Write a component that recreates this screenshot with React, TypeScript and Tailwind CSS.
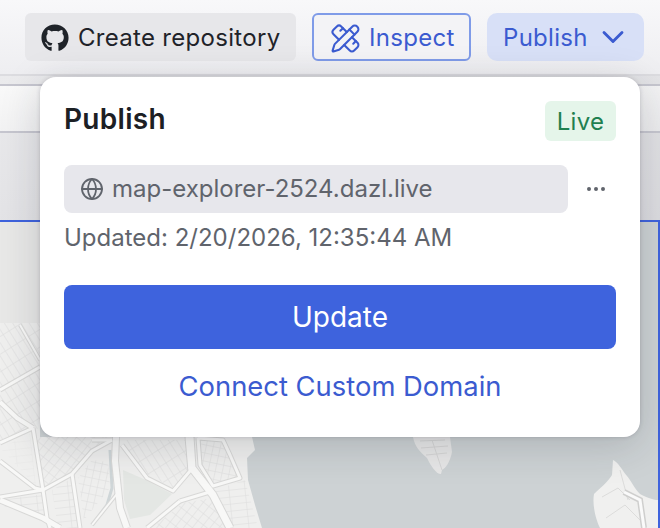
import { ChevronDown, Ellipsis, Globe, PencilRuler } from 'lucide-react';
import { FaGithub } from 'react-icons/fa';

const land = '#efefee';
const street = '#dcdcdb';
const road = '#f8f8f7';
const roadEdge = '#d8d8d7';

// Main roads as [path, width], drawn twice to get the darker casing
const roads: [string, number][] = [
    ['M33 428L43 490L47 518L50 528', 3],
    ['M0 461L35 488L43 490', 3],
    ['M0 497L43 490L72 474L92 451L112 440', 3],
    ['M72 474L80 528', 3],
    ['M0 500L43 518L60 528', 5],
    ['M0 390L40 367', 3],
    ['M20 325L40 360', 2],
    ['M0 402L17 418L33 428', 4],
    ['M0 443L33 428', 3],
    ['M122 445L147 478L173 491L190 471L187 437', 3],
    ['M180 501L147 528', 3],
    ['M213 491L180 501', 3],
    ['M198 438L200 465L213 486L240 478L230 455L223 440L198 438', 3],
    ['M92 440L112 440', 3],
    ['M92 525L120 490', 2],
    ['M116 437L115 461L120 508L127 528', 6],
    ['M190 437L192 468L213 495L230 528', 7],
];

// Map tile under the popover, in page coordinates
function MapBackdrop() {
    return (
        <svg className="block w-full h-full" viewBox="0 222 658 306" preserveAspectRatio="none">
            <defs>
                <pattern id="gridA" width="7" height="15" patternUnits="userSpaceOnUse" patternTransform="rotate(-32)">
                    <path d="M0 0H7M0 0V15" fill="none" stroke={street} strokeWidth="1" />
                </pattern>
                <pattern id="gridB" width="16" height="7" patternUnits="userSpaceOnUse" patternTransform="rotate(-6)">
                    <path d="M0 0H16M0 0V7" fill="none" stroke={street} strokeWidth="1" />
                </pattern>
                <pattern id="gridC" width="7" height="9" patternUnits="userSpaceOnUse" patternTransform="rotate(38)">
                    <path d="M0 0H7M0 0V9" fill="none" stroke={street} strokeWidth="1" />
                </pattern>
                <pattern id="gridD" width="7" height="8" patternUnits="userSpaceOnUse" patternTransform="rotate(12)">
                    <path d="M0 0H7M0 0V8" fill="none" stroke={street} strokeWidth="1" />
                </pattern>
            </defs>

            <rect x="0" y="222" width="658" height="306" fill="#cdd2d4" />
            <rect x="0" y="222" width="40" height="101" fill="#e8e8e7" />
            <path d="M0 323H40V437H252L255 450L247 458L248 480L255 505L262 528H0Z" fill={land} />
            <path d="M413 437H450L452 452C450 462 446 468 442 470L441 474C436 474 431 466 427 458C420 452 415 447 413 437Z" fill="#e7e7e7" />
            <path d="M613 460C618 462 622 470 627 476C632 482 634 488 640 494C648 498 654 500 658 500V528H600C596 520 592 505 594 494C600 488 608 482 612 475Z" fill="#f0f0ef" />

            <path d="M0 323H40V428L0 445Z" fill="url(#gridA)" />
            <path d="M36 437H112L92 451L72 474L43 490L33 430Z" fill="url(#gridC)" />
            <path d="M0 500L43 494L47 518L0 505ZM52 490L72 478L80 528H58Z" fill="url(#gridB)" />
            <path d="M78 478L92 460L108 462L110 488L84 520Z" fill="url(#gridD)" />
            <path d="M124 440H186L188 470L173 488L147 474L124 444Z" fill="url(#gridA)" />
            <path d="M200 440L224 442L238 476L214 484L202 464Z" fill="url(#gridD)" />
            <path d="M215 490L245 480L258 528H232Z" fill="url(#gridB)" />
            <path d="M183 503L212 498L226 528H152Z" fill="url(#gridC)" />
            <path d="M0 448L30 434L36 486Z" fill="url(#gridB)" opacity="0.4" />
            <path d="M123 470L146 480L172 494L150 515L130 519L124 500Z" fill="#e4e7e4" />
            <path d="M420 441L445 440M421 448L448 446M426 455L447 453M432 440L442 470" fill="none" stroke="#d6d6d6" />
            <path d="M602 497L618 488L630 500M606 518L625 505L640 520M620 470L628 500" fill="none" stroke="#dcdcdb" />

            <path d="M110 450L112 488L107 505L92 525" fill="none" stroke="#cfd6d8" strokeWidth="3" />

            {roads.map(([d, width]) => (
                <path key={`edge-${d}`} d={d} fill="none" stroke={roadEdge} strokeWidth={width + 2} strokeLinejoin="round" />
            ))}
            {roads.map(([d, width]) => (
                <path key={d} d={d} fill="none" stroke={road} strokeWidth={width} strokeLinejoin="round" />
            ))}
            <path d="M624 492L640 500L644 528" fill="none" stroke="#cfcfce" strokeWidth="6" />
            <path d="M624 492L640 500L644 528" fill="none" stroke="#fafafa" strokeWidth="3" />
        </svg>
    );
}

export default function App() {
    return (
        <div className="relative w-[660px] h-[528px] overflow-hidden bg-[#f1f1f3] font-['Inter',sans-serif]">
            {/* Top toolbar */}
            <div className="h-[76px] flex items-center justify-end gap-4 pr-4 bg-gradient-to-b from-[#f8f8fa] to-[#eeeef1] border-b-2 border-[#dcdce0]">
                <button className="w-[271px] h-12 flex items-center gap-[9px] pl-4 pt-[2px] rounded-md bg-[#e7e7ea] text-[#1f2329] text-[24px] tracking-[0.3px]">
                    <FaGithub className="w-7 h-7 shrink-0" />
                    Create repository
                </button>
                <button className="w-[159px] h-12 flex items-center gap-[8px] pl-4 pt-[2px] rounded-md bg-[#f3f3f6] border-2 border-[#7f9be8] text-[#3b5bd0] text-[24px] tracking-[0.3px]">
                    <PencilRuler className="w-[31px] h-[31px] shrink-0" strokeWidth={1.6} />
                    Inspect
                </button>
                <button className="w-[157px] h-12 flex items-center gap-[7px] pl-4 pt-[2px] rounded-[10px] bg-[#d8e0f7] text-[#3b5bd0] text-[24px] tracking-[0.3px]">
                    Publish
                    <ChevronDown className="w-9 h-9 -mt-[2px]" strokeWidth={1.9} />
                </button>
            </div>

            {/* Grey editor rows above the selected map frame */}
            <div className="h-[144px] pt-[8px] bg-gradient-to-br from-[#ebebed] to-[#dcdce0]">
                <div className="h-[49px] border-y-2 border-[#c6c6cf] bg-gradient-to-br from-[#f9f9f9] to-[#ececee]" />
            </div>

            {/* Map preview with selection outline */}
            <div className="h-[308px] border-t-2 border-r-2 border-[#3f63dd]">
                <MapBackdrop />
            </div>

            {/* Publish popover */}
            <div className="absolute left-10 top-[77px] w-[600px] h-[360px] bg-white rounded-2xl shadow-[0_0_4px_rgba(40,40,60,0.2),0_8px_40px_rgba(30,35,45,0.18)] px-6 pt-6">
                <div className="flex items-start justify-between h-10">
                    <h2 className="text-[28px] leading-9 font-semibold tracking-[0.3px] text-[#1c2024]">Publish</h2>
                    <span className="h-10 w-[71px] flex items-center justify-center pt-[2px] rounded-md bg-[#e5f5ea] text-[#1f8050] text-[24px] tracking-[0.3px]">Live</span>
                </div>
                <div className="mt-6 flex items-center justify-between">
                    <div className="w-[504px] h-12 flex items-center gap-[8px] pl-4 rounded-lg bg-[#e7e7ec] text-[#60646c] text-[24px]">
                        <Globe className="w-6 h-6 shrink-0" strokeWidth={1.8} />
                        map-explorer-2524.dazl.live
                    </div>
                    <Ellipsis className="w-6 h-6 mr-2 text-[#60646c]" />
                </div>
                <p className="mt-[11px] text-[24px] leading-7 text-[#60646c]">Updated: 2/20/2026, 12:35:44 AM</p>
                <button className="mt-[33px] w-full h-16 rounded-lg bg-[#3e63dd] text-white text-[28px]">Update</button>
                <div className="mt-[21px] text-center text-[27.4px] leading-8 text-[#3b5bd0]">Connect Custom Domain</div>
            </div>
        </div>
    );
}
